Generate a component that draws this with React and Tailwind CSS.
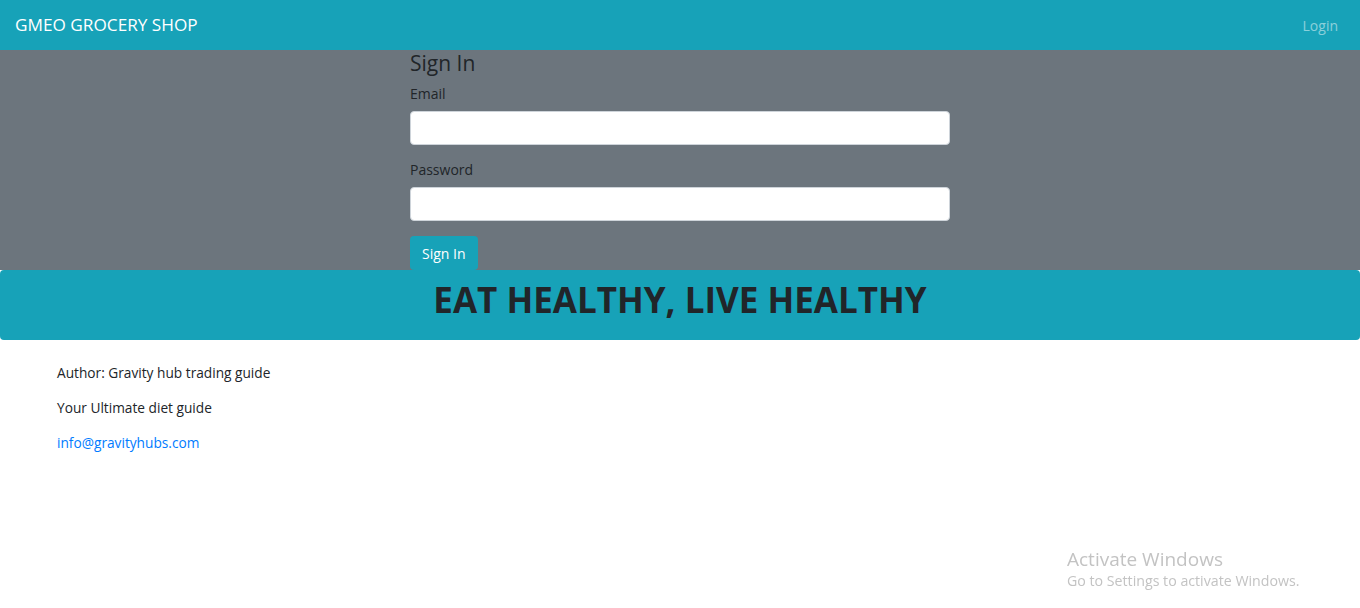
import React from 'react';

const font = { fontFamily: '"Open Sans", "Noto Sans", sans-serif' };

const Field = ({ label, type, last }) => (
    <div className={last ? 'mb-[15px]' : 'mb-[14px]'}>
        <label className="block mb-[7px] text-[14px] leading-[21px] text-[#212529]">{label}</label>
        <input
            type={type}
            className="block w-full h-[34px] rounded-[4px] border border-[#ced4da] bg-white px-3 text-[14px] outline-none"
        />
    </div>
);

export default function App() {
    return (
        <div className="min-h-[608px] bg-white text-[13.7px] text-[#212529]" style={font}>
            <nav className="h-[50px] bg-[#17a2b8] flex items-center justify-between pl-[15px] pr-[22px]">
                <span className="text-[17.2px] text-white">GMEO GROCERY SHOP</span>
                <span className="text-[14px] text-white/50">Login</span>
            </nav>

            <section className="bg-[#6c757d]">
                <div className="w-[540px] mx-auto">
                    <h4 className="text-[21px] leading-[26px] font-medium mb-[7px] text-[#212529]">Sign In</h4>
                    <Field label="Email" type="email" />
                    <Field label="Password" type="password" last />
                    <button className="h-[34px] px-3 rounded-[4px] bg-[#17a2b8] text-white text-[14px]">Sign In</button>
                </div>
            </section>

            <div className="bg-[#17a2b8] rounded-[4px] pt-[9px] pb-[19px] text-center">
                <h1 className="text-[35px] leading-[42px] font-bold text-[#212529]">EAT HEALTHY, LIVE HEALTHY</h1>
            </div>

            <footer className="pl-[57px] pt-[22px]">
                <p className="mb-[14px] leading-[21px]">Author: Gravity hub trading guide</p>
                <p className="mb-[14px] leading-[21px]">Your Ultimate diet guide</p>
                <p className="leading-[21px]">
                    <a href="#" className="text-[#007bff]">info@gravityhubs.com</a>
                </p>
            </footer>

            <div className="fixed left-[1067px] top-[546px] text-[#c3c3c3] pointer-events-none">
                <div className="text-[19px] leading-[26px]">Activate Windows</div>
                <div className="text-[14.2px] leading-[18px]">Go to Settings to activate Windows.</div>
            </div>
        </div>
    );
}
